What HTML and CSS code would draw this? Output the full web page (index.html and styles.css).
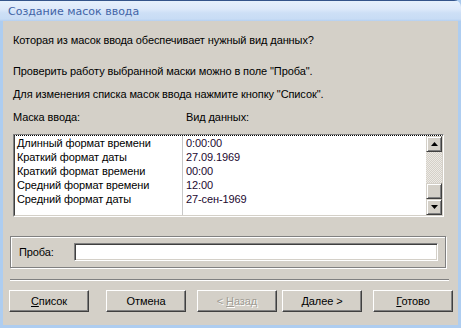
FILE: index.html
```html
<!DOCTYPE html>
<html>
<head>
<meta charset="utf-8">
<link rel="stylesheet" href="styles.css">
</head>
<body>
<div class="window">
  <div class="titlebar"><span class="title">Создание масок ввода</span></div>
  <div class="client">
    <p class="line l1">Которая из масок ввода обеспечивает нужный вид данных?</p>
    <p class="line l2">Проверить работу выбранной маски можно в поле "Проба".</p>
    <p class="line l3">Для изменения списка масок ввода нажмите кнопку "Список".</p>
    <div class="headers">
      <span class="h1">Маска ввода:</span>
      <span class="h2">Вид данных:</span>
    </div>
    <div class="listbox">
      <div class="listinner">
        <div class="rows">
          <div class="row"><span class="c1">Длинный формат времени</span><span class="c2">0:00:00</span></div>
          <div class="row"><span class="c1">Краткий формат даты</span><span class="c2">27.09.1969</span></div>
          <div class="row"><span class="c1">Краткий формат времени</span><span class="c2">00:00</span></div>
          <div class="row"><span class="c1">Средний формат времени</span><span class="c2">12:00</span></div>
          <div class="row"><span class="c1">Средний формат даты</span><span class="c2">27-сен-1969</span></div>
          <div class="row filler"><span class="c1"></span><span class="c2"></span></div>
        </div>
        <div class="scrollbar">
          <div class="sbtn"><svg width="7" height="4" viewBox="0 0 7 4"><path d="M3.5 0 L7 4 L0 4 Z" fill="#000"/></svg></div>
          <div class="track"></div>
          <div class="sbtn thumb"></div>
          <div class="sbtn"><svg width="7" height="4" viewBox="0 0 7 4"><path d="M0 0 L7 0 L3.5 4 Z" fill="#000"/></svg></div>
        </div>
      </div>
    </div>
    <div class="group">
      <span class="plabel">Проба:</span>
      <div class="input"></div>
    </div>
    <div class="sep"></div>
    <div class="buttons">
      <div class="btn b1"><span><u>С</u>писок</span></div>
      <div class="btn b2"><span>Отмена</span></div>
      <div class="btn b3 disabled"><span>&lt; <u>Н</u>азад</span></div>
      <div class="btn b4"><span><u>Д</u>алее &gt;</span></div>
      <div class="btn b5"><span><u>Г</u>отово</span></div>
    </div>
  </div>
</div>
</body>
</html>
```

FILE: styles.css
```css
* { box-sizing: border-box; }
html, body { margin: 0; padding: 0; }
body {
  width: 461px;
  height: 328px;
  overflow: hidden;
  background: #a9c9ee;
  font-family: "Liberation Sans", Arial, sans-serif;
  font-size: 11px;
  letter-spacing: -0.1px;
  color: #000;
}
.window {
  width: 461px;
  height: 328px;
  display: flex;
  flex-direction: column;
  background: #aecdf0;
  border-top-right-radius: 7px;
  overflow: hidden;
}
.titlebar {
  height: 21px;
  flex: none;
  border-top: 1px solid #34548a;
  background: linear-gradient(#e6f0fc 0%, #dde9fa 40%, #cddff6 60%, #c8dcf5 90%, #b4cff0 100%);
  padding-left: 8px;
  display: flex;
  align-items: center;
}
.title {
  font-family: "DejaVu Sans", sans-serif;
  font-size: 11px;
  letter-spacing: 0;
  color: #4264a6;
}
.client {
  flex: 1;
  margin: 0 3px 3px 3px;
  background: #d4d0c8;
  display: flex;
  flex-direction: column;
  padding: 0 0 0 7px;
}
.line {
  margin: 0;
  line-height: 13px;
  height: 13px;
  padding-left: 3px;
  white-space: nowrap;
}
.l1 { margin-top: 13px; }
.l2 { margin-top: 18px; }
.l3 { margin-top: 10px; }
.headers {
  margin-top: 10px;
  height: 13px;
  line-height: 13px;
  padding-left: 3px;
  display: flex;
}
.h1 { width: 173px; }
.listbox {
  margin-top: 10px;
  margin-left: 3px;
  width: 431px;
  height: 83px;
  border-top: 1px solid #808080;
  border-left: 1px solid #808080;
  border-right: 1px solid #ffffff;
  border-bottom: 1px solid #ffffff;
}
.listinner {
  width: 100%;
  height: 100%;
  border-top: 1px dotted #000;
  border-left: 1px solid #404040;
  border-right: 1px solid #d4d0c8;
  border-bottom: 1px solid #d4d0c8;
  background: #fff;
  display: flex;
}
.rows {
  flex: 1;
  display: flex;
  flex-direction: column;
}
.row {
  display: flex;
  height: 14px;
  line-height: 14px;
  white-space: nowrap;
}
.row.filler { flex: 1; }
.c1 {
  width: 168px;
  padding-left: 2px;
  border-right: 1px solid #c8c8c8;
}
.c2 {
  padding-left: 3px;
  color: #1c0830;
}
.scrollbar {
  width: 16px;
  display: flex;
  flex-direction: column;
}
.sbtn {
  width: 16px;
  height: 16px;
  flex: none;
  background: #d4d0c8;
  border-top: 1px solid #d4d0c8;
  border-left: 1px solid #d4d0c8;
  border-right: 1px solid #404040;
  border-bottom: 1px solid #404040;
  box-shadow: inset 1px 1px 0 #fff, inset -1px -1px 0 #808080;
  display: flex;
  align-items: center;
  justify-content: center;
}
.track {
  flex: 1;
  background-color: #ece9e4;
  background-image:
    linear-gradient(45deg, #d4d0c8 25%, transparent 25%, transparent 75%, #d4d0c8 75%),
    linear-gradient(45deg, #d4d0c8 25%, transparent 25%, transparent 75%, #d4d0c8 75%);
  background-size: 2px 2px;
  background-position: 0 0, 1px 1px;
}
.group {
  margin-top: 19px;
  width: 436px;
  height: 32px;
  border: 1px solid #808080;
  box-shadow: inset 1px 1px 0 #fff, 1px 1px 0 #fff;
  display: flex;
  align-items: center;
  padding-left: 8px;
}
.plabel { width: 55px; }
.input {
  width: 364px;
  height: 18px;
  background: #fff;
  border-top: 1px solid #808080;
  border-left: 1px solid #808080;
  border-right: 1px solid #fff;
  border-bottom: 1px solid #fff;
  box-shadow: inset 1px 1px 0 #404040, inset -1px -1px 0 #d4d0c8;
}
.sep {
  margin-top: 11px;
  width: 439px;
  height: 2px;
  border-top: 1px solid #808080;
  border-bottom: 1px solid #fff;
}
.buttons {
  margin-top: 9px;
  display: flex;
  margin-left: -1px;
}
.btn {
  width: 80px;
  height: 22px;
  background: #d4d0c8;
  border-top: 1px solid #fff;
  border-left: 1px solid #fff;
  border-right: 1px solid #404040;
  border-bottom: 1px solid #404040;
  box-shadow: inset -1px -1px 0 #808080;
  display: flex;
  align-items: center;
  justify-content: center;
  line-height: 13px;
}
.b2 { margin-left: 17px; }
.b3 { margin-left: 11px; }
.b4 { margin-left: 5px; }
.b5 { margin-left: 11px; }
.disabled span {
  color: #a09c94;
  text-shadow: 1px 1px 0 #fff;
}
u { text-decoration: underline; text-underline-offset: 1px; }
```
